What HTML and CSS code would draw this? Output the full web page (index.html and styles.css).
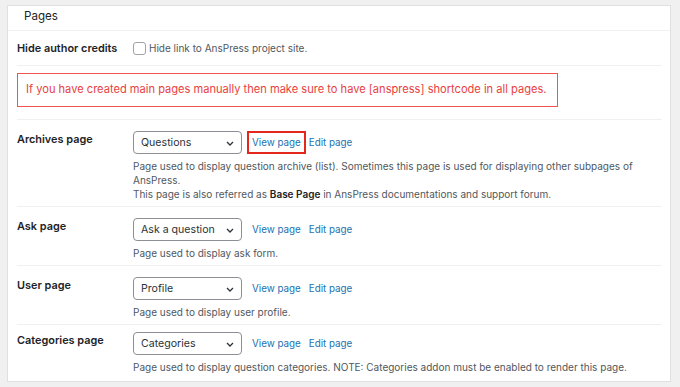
FILE: index.html
```html
<!DOCTYPE html>
<html>
<head>
<meta charset="utf-8">
<link rel="stylesheet" href="styles.css">
</head>
<body>
<div class="panel">
  <div class="panel-head">Pages</div>
  <div class="panel-body">
    <div class="row row-check">
      <div class="label">Hide author credits</div>
      <div class="field check-field">
        <span class="checkbox"></span>
        <span class="check-text">Hide link to AnsPress project site.</span>
      </div>
    </div>
    <div class="row row-notice">
      <div class="notice">If you have created main pages manually then make sure to have [anspress] shortcode in all pages.</div>
    </div>
    <div class="row">
      <div class="label">Archives page</div>
      <div class="field">
        <div class="controls">
          <div class="select"><span>Questions</span><svg class="chev" width="8" height="5" viewBox="0 0 8 5"><path d="M1 1l3 3 3-3" fill="none" stroke="#2c3338" stroke-width="1.3"/></svg></div>
          <a class="link link-marked">View page</a>
          <a class="link">Edit page</a>
        </div>
        <p class="desc">Page used to display question archive (list). Sometimes this page is used for displaying other subpages of AnsPress.<br>This page is also referred as <b>Base Page</b> in AnsPress documentations and support forum.</p>
      </div>
    </div>
    <div class="row">
      <div class="label">Ask page</div>
      <div class="field">
        <div class="controls">
          <div class="select"><span>Ask a question</span><svg class="chev" width="8" height="5" viewBox="0 0 8 5"><path d="M1 1l3 3 3-3" fill="none" stroke="#2c3338" stroke-width="1.3"/></svg></div>
          <a class="link">View page</a>
          <a class="link">Edit page</a>
        </div>
        <p class="desc">Page used to display ask form.</p>
      </div>
    </div>
    <div class="row">
      <div class="label">User page</div>
      <div class="field">
        <div class="controls">
          <div class="select"><span>Profile</span><svg class="chev" width="8" height="5" viewBox="0 0 8 5"><path d="M1 1l3 3 3-3" fill="none" stroke="#2c3338" stroke-width="1.3"/></svg></div>
          <a class="link">View page</a>
          <a class="link">Edit page</a>
        </div>
        <p class="desc">Page used to display user profile.</p>
      </div>
    </div>
    <div class="row row-last">
      <div class="label">Categories page</div>
      <div class="field">
        <div class="controls">
          <div class="select"><span>Categories</span><svg class="chev" width="8" height="5" viewBox="0 0 8 5"><path d="M1 1l3 3 3-3" fill="none" stroke="#2c3338" stroke-width="1.3"/></svg></div>
          <a class="link">View page</a>
          <a class="link">Edit page</a>
        </div>
        <p class="desc">Page used to display question categories. NOTE: Categories addon must be enabled to render this page.</p>
      </div>
    </div>
  </div>
</div>
</body>
</html>
```
FILE: styles.css
```css
* { box-sizing: border-box; }
html, body { margin: 0; padding: 0; }
body {
  background: #f0f0f1;
  font-family: "Inter", "Liberation Sans", sans-serif;
  color: #1d2327;
  height: 387px;
  overflow: hidden;
}
.panel {
  margin: 5px 0 0 7px;
  width: 664px;
  height: 377px;
  background: #fff;
  border: 1px solid #e0e0e0;
  overflow: hidden;
}
.panel-head {
  height: 25px;
  padding-left: 16px;
  font-size: 11.6px;
  line-height: 21px;
  border-bottom: 1px solid #f0f0f1;
}
.panel-body {
  padding: 0 8px 0 9px;
}
.row {
  display: flex;
  border-bottom: 1px solid #f0f0f1;
  padding: 11px 0 5px;
}
.row-last { border-bottom: none; padding-top: 7px; }
.label {
  width: 116px;
  flex: none;
  font-size: 10.9px;
  font-weight: 600;
  line-height: 16px;
}
.field { flex: 1; }
.row-check { height: 35px; padding: 0; align-items: center; }
.check-field { display: flex; align-items: center; gap: 3px; }
.checkbox {
  width: 13px;
  height: 13px;
  border: 1px solid #a0a3a8;
  border-radius: 3px;
  background: #fff;
}
.check-text { font-size: 10px; color: #50575e; }
.row-notice { height: 54px; padding: 7px 0 0; }
.notice {
  width: 541px;
  height: 34px;
  border: 1.5px solid #f25550;
  color: #e8413e;
  font-size: 11.1px;
  line-height: 31px;
  padding-left: 8px;
  white-space: nowrap;
}
.controls { display: flex; align-items: center; height: 23px; }
.select {
  width: 109px;
  height: 23px;
  border: 1px solid #8c8f94;
  border-radius: 4px;
  display: flex;
  align-items: center;
  justify-content: space-between;
  padding: 0 7px 0 7px;
  font-size: 10.6px;
  color: #2c3338;
}
.chev { margin-top: 1px; }
.link {
  color: #2271b1;
  font-size: 9.8px;
  line-height: 19px;
  padding: 0 3px;
  margin-left: 5px;
  border: 2px solid transparent;
}
.link + .link { margin-left: -1px; padding-left: 2px; }
.link-marked { border-color: #e4261b; }
.desc {
  margin: 5px 0 0;
  font-size: 10px;
  line-height: 14px;
  color: #50575e;
}
.desc b { font-weight: 600; color: #1d2327; }
```
